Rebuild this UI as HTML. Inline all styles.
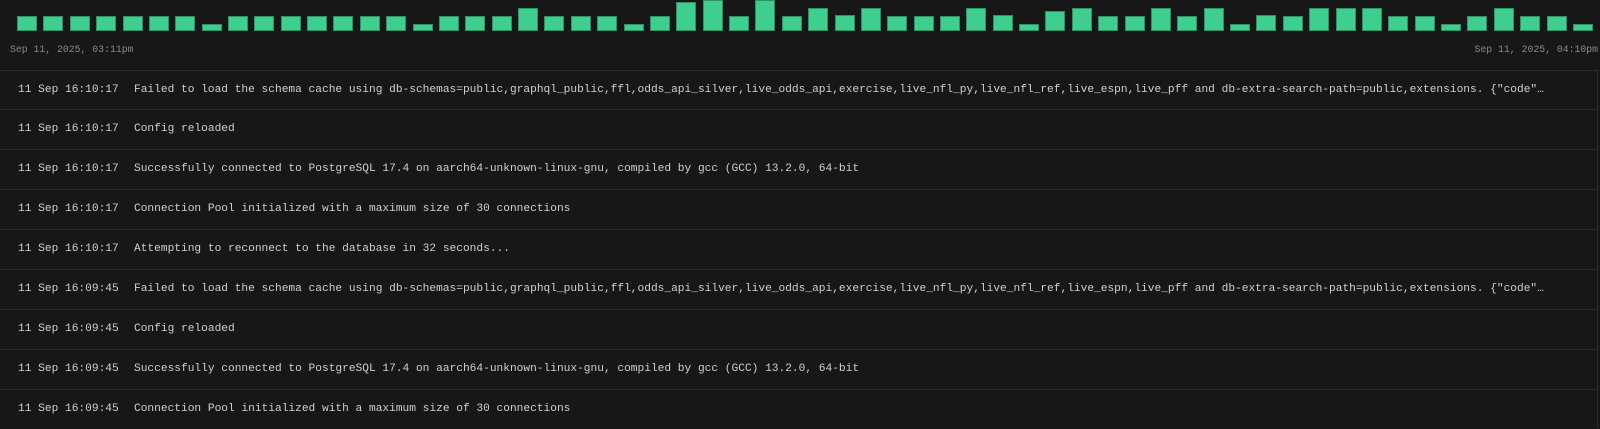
<!DOCTYPE html>
<html><head><meta charset="utf-8"><style>
html,body{margin:0;padding:0;background:#171717;width:1600px;height:428px;overflow:hidden;font-family:"Liberation Mono",monospace;}
.bar{position:absolute;width:20px;background:#3ecf8e;border:0.5px solid #2f8f66;box-sizing:border-box;}
.lbl{position:absolute;top:43px;font-size:9.8px;color:#8a8a8a;line-height:14px;}
.row{position:absolute;left:0;width:1597px;height:40px;border-top:1px solid #2a2a2a;box-sizing:border-box;font-size:11.2px;color:#d0d0d0;line-height:38px;white-space:nowrap;}
.ts{position:absolute;left:18px;}
.msg{position:absolute;left:134px;}
.vl{position:absolute;left:1597px;top:70px;width:1px;height:358px;background:#2a2a2a;}
</style></head><body>
<div id="bars"></div>
<div class="lbl" style="left:10px">Sep 11, 2025, 03:11pm</div>
<div class="lbl" style="right:2px">Sep 11, 2025, 04:10pm</div>
<div class="vl"></div>
<div class="row" style="top:70px"><span class="ts">11 Sep 16:10:17</span><span class="msg">Failed to load the schema cache using db-schemas=public,graphql_public,ffl,odds_api_silver,live_odds_api,exercise,live_nfl_py,live_nfl_ref,live_espn,live_pff and db-extra-search-path=public,extensions. {"code"…</span></div>
<div class="row" style="top:109px"><span class="ts">11 Sep 16:10:17</span><span class="msg">Config reloaded</span></div>
<div class="row" style="top:149px"><span class="ts">11 Sep 16:10:17</span><span class="msg">Successfully connected to PostgreSQL 17.4 on aarch64-unknown-linux-gnu, compiled by gcc (GCC) 13.2.0, 64-bit</span></div>
<div class="row" style="top:189px"><span class="ts">11 Sep 16:10:17</span><span class="msg">Connection Pool initialized with a maximum size of 30 connections</span></div>
<div class="row" style="top:229px"><span class="ts">11 Sep 16:10:17</span><span class="msg">Attempting to reconnect to the database in 32 seconds...</span></div>
<div class="row" style="top:269px"><span class="ts">11 Sep 16:09:45</span><span class="msg">Failed to load the schema cache using db-schemas=public,graphql_public,ffl,odds_api_silver,live_odds_api,exercise,live_nfl_py,live_nfl_ref,live_espn,live_pff and db-extra-search-path=public,extensions. {"code"…</span></div>
<div class="row" style="top:309px"><span class="ts">11 Sep 16:09:45</span><span class="msg">Config reloaded</span></div>
<div class="row" style="top:349px"><span class="ts">11 Sep 16:09:45</span><span class="msg">Successfully connected to PostgreSQL 17.4 on aarch64-unknown-linux-gnu, compiled by gcc (GCC) 13.2.0, 64-bit</span></div>
<div class="row" style="top:389px"><span class="ts">11 Sep 16:09:45</span><span class="msg">Connection Pool initialized with a maximum size of 30 connections</span></div>
<script>
var tops=[16,16,16,16,16,16,16,24,16,16,16,16,16,16,16,24,16,16,16,8,16,16,16,24,16,2,0,16,0,16,
8,15,8,16,16,16,8,15,24,11,8,16,16,8,16,8,24,15,16,8,8,8,16,16,24,16,8,16,16,24];
var h='';
for(var i=0;i<60;i++){var x=17+i*26.37;var t=tops[i];h+='<div class="bar" style="left:'+x.toFixed(1)+'px;top:'+t+'px;height:'+(31-t)+'px"></div>';}
document.getElementById('bars').innerHTML=h;
</script>
</body></html>
